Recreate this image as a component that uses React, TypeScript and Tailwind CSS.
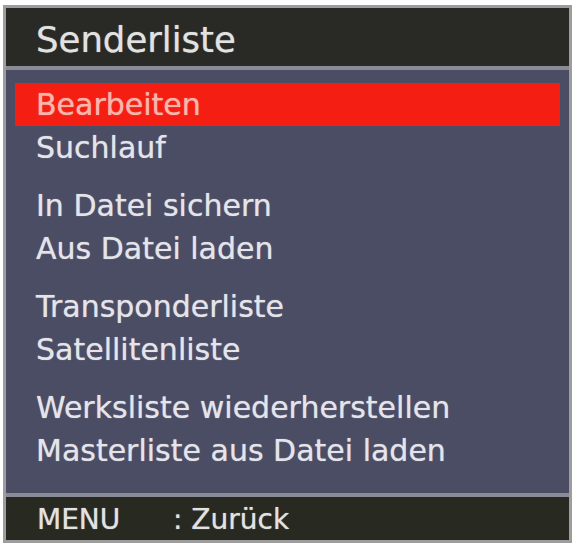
import React from "react";

const groups: string[][] = [
  ["Bearbeiten", "Suchlauf"],
  ["In Datei sichern", "Aus Datei laden"],
  ["Transponderliste", "Satellitenliste"],
  ["Werksliste wiederherstellen", "Masterliste aus Datei laden"],
];

const selected = "Bearbeiten";

export default function App() {
  return (
    <div className="w-[575px] h-[546px] bg-white pt-[5px] pl-[3px] font-['DejaVu_Sans',sans-serif] [text-shadow:0_0_1px_rgba(255,255,255,0.6)]">
      <div className="w-[569px] h-[538px] border-[3px] border-[#9d9d9d] flex flex-col">
        {/* Titel */}
        <div className="h-[58px] bg-[#292a26] pt-[6px] pl-[30px] text-[35.5px] leading-[52px] text-[#e2e2e2]">
          Senderliste
        </div>
        <div className="h-[4px] bg-[#898c97]" />

        {/* Menüeinträge */}
        <div className="flex-1 bg-[#4a4d64] px-[9px] pt-[13px] flex flex-col gap-[15px]">
          {groups.map((group, gi) => (
            <div key={gi} className="flex flex-col">
              {group.map((label) => (
                <div
                  key={label}
                  className={`h-[43px] pl-[21px] text-[30px] leading-[43px] whitespace-nowrap ${
                    label === selected
                      ? "bg-[#f41f12] text-[#f7b6a9]"
                      : "text-[#e4e4ea]"
                  }`}
                >
                  {label}
                </div>
              ))}
            </div>
          ))}
        </div>

        <div className="h-[4px] bg-[#898c97]" />
        {/* Fußzeile */}
        <div className="h-[43px] bg-[#282a22] pt-[3px] pl-[31px] flex text-[28px] leading-[40px] text-[#e2e2e2]">
          <span className="w-[136px]">MENU</span>
          <span>: Zurück</span>
        </div>
      </div>
    </div>
  );
}
